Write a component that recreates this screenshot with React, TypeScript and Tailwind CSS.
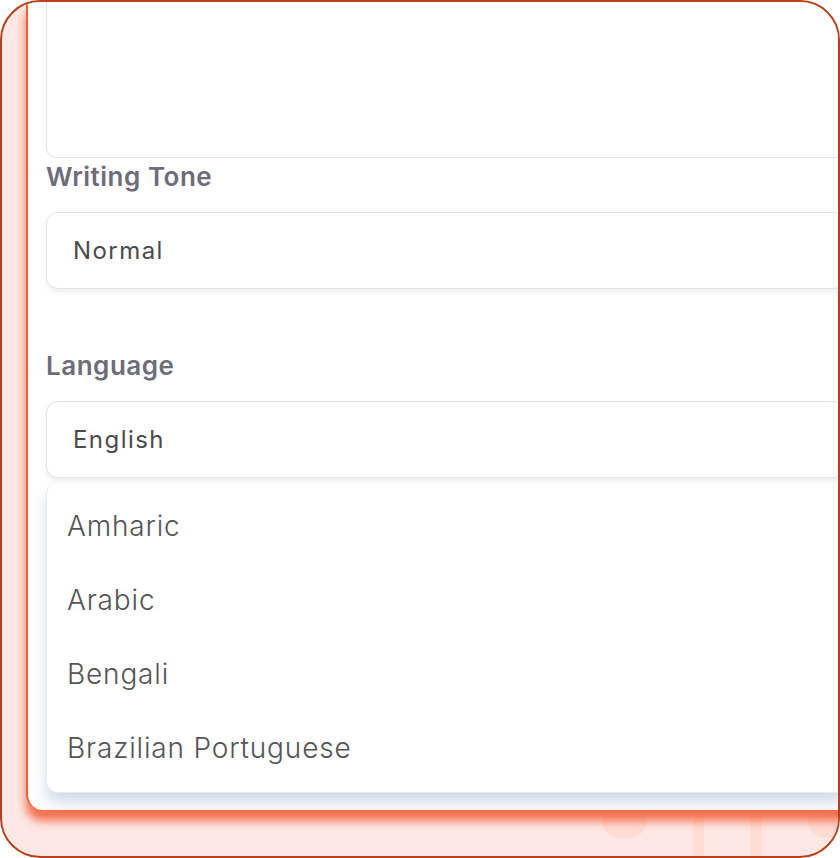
import React from 'react';

// ─── Data ─────────────────────────────────────────────────────
const LANGUAGES = ['Amharic', 'Arabic', 'Bengali', 'Brazilian Portuguese'];

const FONT = { fontFamily: 'Inter, "Open Sans", sans-serif' };

// ─── Select field ─────────────────────────────────────────────
function SelectBox({ value }: { value: string }) {
  return (
    <div className="h-[77px] w-full rounded-[12px] border-[1.5px] border-[#e2e3e7] bg-white pl-[26px] flex items-center shadow-[0_3px_5px_rgba(30,40,60,0.08)]">
      <span className="text-[24px] tracking-[0.06em] text-[#4a4a4c]">{value}</span>
    </div>
  );
}

function Label({ children }: { children: React.ReactNode }) {
  return (
    <div className="text-[26px] leading-[32px] tracking-[0.02em] font-semibold text-[#6c6c7a]">{children}</div>
  );
}

export default function App() {
  return (
    <div className="w-[840px] h-[858px] bg-white" style={FONT}>
      <div className="w-[840px] h-[858px] rounded-[40px] border-2 border-[#b8411b] bg-[#fde8e5] overflow-hidden">
        {/* card */}
        <div className="relative z-10 ml-[24px] w-[900px] h-[808px] bg-white border-l-2 border-[#f3602f] rounded-bl-[16px] shadow-[0_11px_10px_rgba(243,100,62,0.9)] pl-[18px] pr-[80px] overflow-hidden">
          <div className="h-[156px] border-x-[1.5px] border-b-[1.5px] border-[#e2e4e9] rounded-b-[10px]" />

          <div className="mt-[3px]">
            <Label>Writing Tone</Label>
          </div>
          <div className="mt-[19px]">
            <SelectBox value="Normal" />
          </div>

          <div className="mt-[61px]">
            <Label>Language</Label>
          </div>
          <div className="mt-[19px]">
            <SelectBox value="English" />
          </div>

          {/* dropdown list */}
          <div className="mt-[5px] h-[310px] rounded-[12px] bg-white pt-[6px] pl-[20px] shadow-[0_10px_14px_rgba(110,140,190,0.3)] border-b border-l border-[#e7ecf4]">
            {LANGUAGES.map((lang) => (
              <div key={lang} className="h-[74px] flex items-center text-[28px] tracking-[0.03em] font-light text-[#545456]">
                {lang}
              </div>
            ))}
          </div>
        </div>

        {/* faint shapes of the page behind */}
        <div className="flex items-start gap-[46px] pl-[600px] -mt-[8px]">
          <div className="w-[60px] h-[36px] rounded-b-[18px] bg-[#ffdcd4]" />
          <div className="w-[16px] h-[60px] bg-[#ffdcd4]" />
          <div className="w-[16px] h-[60px] bg-[#ffdcd4]" />
          <div className="w-[40px] h-[36px] rounded-bl-[18px] bg-[#ffdcd4]" />
        </div>
      </div>
    </div>
  );
}
